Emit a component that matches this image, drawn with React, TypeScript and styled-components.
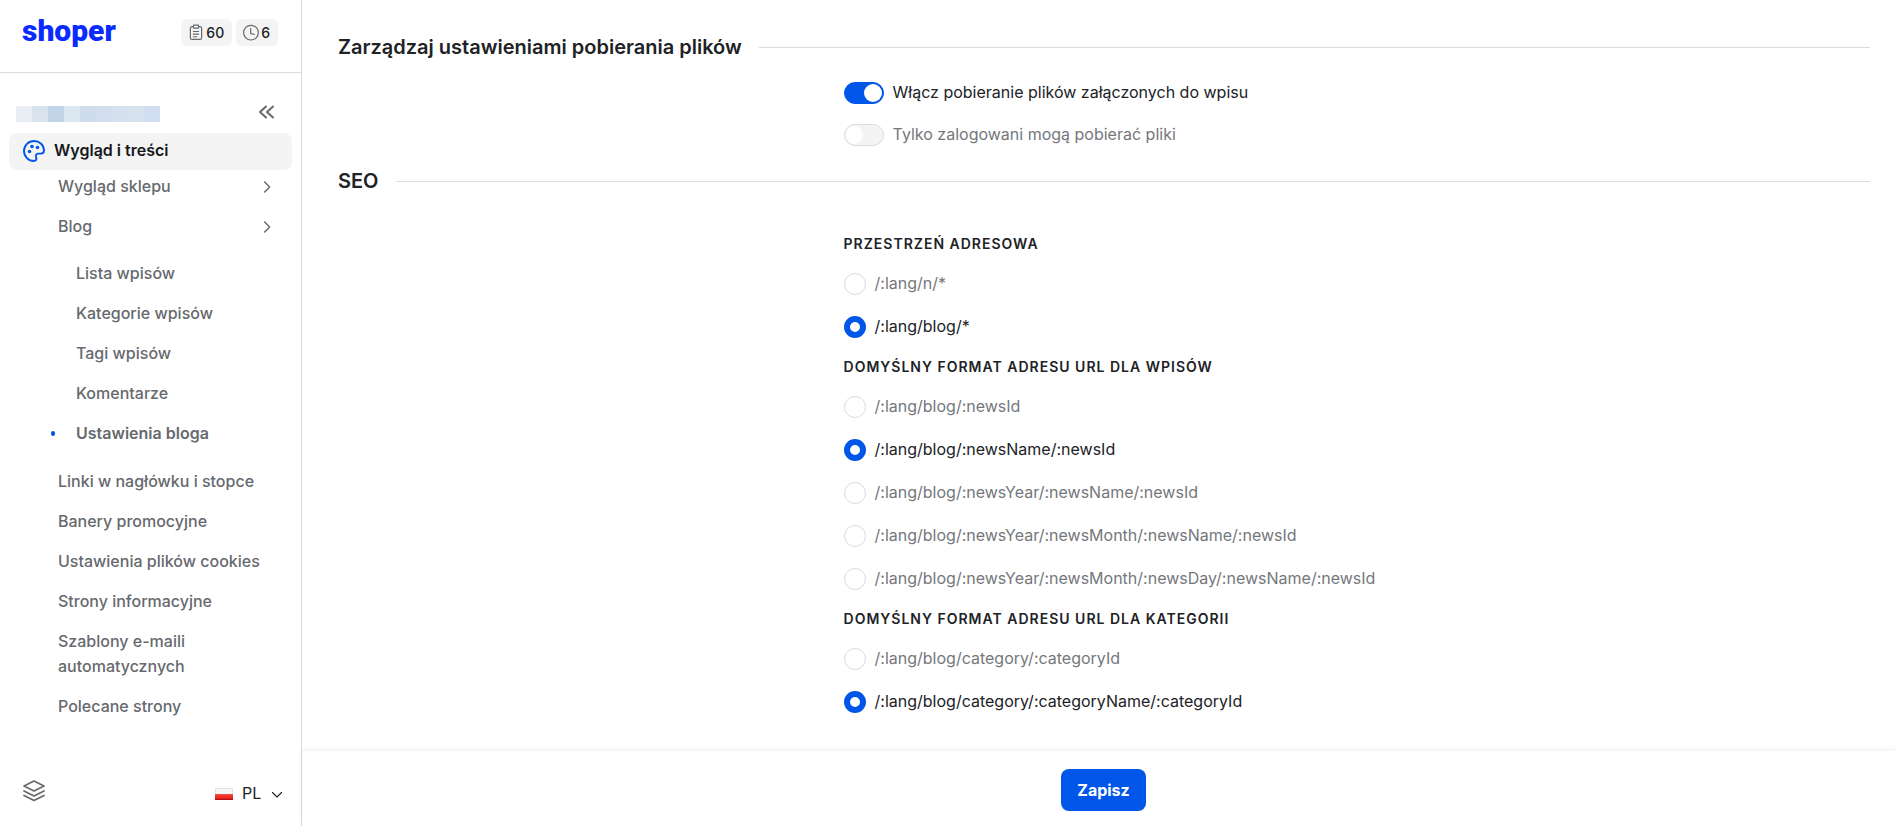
import React, { useState } from "react";
import styled, { createGlobalStyle, css } from "styled-components";

const color = {
  text: "#202226",
  muted: "#66696e",
  inactive: "#75777b",
  blue: "#0056e8",
  brand: "#0a2bff",
  line: "#dcdcde",
  soft: "#f4f4f4",
};

const GlobalStyle = createGlobalStyle`
  *, *::before, *::after { box-sizing: border-box; }
  body {
    margin: 0;
    background: #fff;
    color: ${color.text};
    font-family: Inter, "Liberation Sans", sans-serif;
    font-size: 16px;
    line-height: 25px;
  }
  button, select, input { font: inherit; color: inherit; margin: 0; }
  ul { list-style: none; margin: 0; padding: 0; }
`;

const Page = styled.div`
  display: flex;
  min-height: 100vh;
`;

const Sidebar = styled.aside`
  display: flex;
  flex-direction: column;
  flex: none;
  width: 302px;
  border-right: 1px solid ${color.line};
`;

const SidebarHeader = styled.header`
  display: flex;
  justify-content: space-between;
  align-items: flex-start;
  padding: 14px 23px 0 22px;
  height: 73px;
  border-bottom: 1px solid ${color.line};
`;

const Logo = styled.a`
  color: ${color.brand};
  font-family: Roboto, Inter, sans-serif;
  font-size: 30px;
  line-height: 34px;
  font-weight: 900;
  text-decoration: none;
`;

const Counters = styled.div`
  display: flex;
  gap: 4px;
  padding-top: 5px;
`;

const Counter = styled.button`
  display: flex;
  align-items: center;
  gap: 1px;
  height: 27px;
  padding: 0 8px 0 6px;
  border: 0;
  border-radius: 6px;
  background: ${color.soft};
  font-size: 14px;
  font-weight: 500;
  svg { color: ${color.muted}; }
`;

const StoreRow = styled.div`
  display: flex;
  justify-content: space-between;
  align-items: flex-end;
  padding: 27px 22px 9px 16px;
`;

const StoreName = styled.div`
  display: flex;
  padding-bottom: 2px;
`;

const Tile = styled.span<{ $tone: string }>`
  width: 16px;
  height: 16px;
  background: ${(p) => p.$tone};
`;

const IconButton = styled.button`
  display: flex;
  align-items: center;
  justify-content: center;
  padding: 0;
  border: 0;
  background: none;
  color: ${color.muted};
`;

const SectionLink = styled.a`
  display: flex;
  align-items: center;
  gap: 8px;
  height: 37px;
  margin: 0 9px;
  padding: 0 13px 2px;
  border-radius: 8px;
  background: ${color.soft};
  color: #17181b;
  font-weight: 600;
  text-decoration: none;
  svg { color: ${color.blue}; }
`;

const Menu = styled.ul`
  display: flex;
  flex-direction: column;
  gap: 15px;
  padding: 4px 27px 0 58px;
`;

const SubMenu = styled.ul`
  display: flex;
  flex-direction: column;
  gap: 15px;
  padding: 22px 0 8px 18px;
`;

const MenuLink = styled.a<{ $current?: boolean }>`
  display: flex;
  align-items: center;
  justify-content: space-between;
  position: relative;
  color: ${color.muted};
  font-weight: 500;
  text-decoration: none;
  ${(p) =>
    p.$current &&
    css`
      font-weight: 600;
      &::before {
        content: "";
        position: absolute;
        left: -25px;
        width: 4px;
        height: 5px;
        border-radius: 2px;
        background: ${color.blue};
      }
    `}
`;

const SidebarFooter = styled.footer`
  display: flex;
  align-items: flex-start;
  justify-content: space-between;
  margin-top: auto;
  padding: 0 18px 20px 22px;
`;

const Language = styled.label`
  display: flex;
  align-items: center;
  gap: 9px;
  padding-top: 2px;
`;

const LanguageSelect = styled.select`
  appearance: none;
  border: 0;
  background: none;
  padding: 0;
  width: 20px;
  line-height: 25px;
`;

const Main = styled.main`
  display: flex;
  flex-direction: column;
  flex: 1;
  min-width: 0;
`;

const Content = styled.div`
  flex: 1;
  padding: 34px 26px 36px 36px;
`;

const Heading = styled.h2<{ $spaced?: boolean }>`
  display: flex;
  align-items: center;
  gap: 17px;
  margin: ${(p) => (p.$spaced ? "22px 0 40px" : "0 0 22px")};
  font-size: 20px;
  line-height: 26px;
  font-weight: 600;
  &::after {
    content: "";
    flex: 1;
    height: 1px;
    background: ${color.line};
  }
`;

const Fields = styled.div<{ $gap: number }>`
  display: flex;
  flex-direction: column;
  gap: ${(p) => p.$gap}px;
  padding-left: 33%;
`;

const Group = styled.fieldset`
  min-width: 0;
  margin: 0;
  padding: 0;
  border: 0;
`;

const Legend = styled.legend`
  margin-bottom: 19px;
  padding: 0;
  font-size: 14px;
  line-height: 20px;
  font-weight: 600;
  letter-spacing: 1px;
`;

const Options = styled.div`
  display: flex;
  flex-direction: column;
  gap: 21px;
`;

const Option = styled.label<{ $on: boolean }>`
  display: flex;
  align-items: flex-start;
  gap: 9px;
  height: 22px;
  line-height: 20px;
  color: ${(p) => (p.$on ? color.text : color.inactive)};
`;

const Radio = styled.input`
  appearance: none;
  flex: none;
  width: 22px;
  height: 22px;
  border: 1px solid ${color.line};
  border-radius: 50%;
  background: #fff;
  &:checked { border: 6px solid ${color.blue}; }
`;

const Switch = styled.input`
  appearance: none;
  display: flex;
  align-items: center;
  flex: none;
  width: 40px;
  height: 22px;
  padding: 0 1px;
  border: 1px solid ${color.line};
  border-radius: 11px;
  background: ${color.soft};
  &::before {
    content: "";
    width: 17px;
    height: 18px;
    border-radius: 50%;
    background: #fff;
  }
  &:checked {
    justify-content: flex-end;
    border-color: ${color.blue};
    background: ${color.blue};
  }
  &:checked::before { width: 18px; }
`;

const ActionBar = styled.footer`
  position: sticky;
  bottom: 0;
  display: flex;
  justify-content: center;
  padding: 18px 27px 15px 36px;
  background: #fff;
  box-shadow: 0 -2px 5px rgba(0, 0, 0, 0.06);
`;

const SaveButton = styled.button`
  height: 42px;
  padding: 0 16px;
  border: 0;
  border-radius: 8px;
  background: ${color.blue};
  color: #fff;
  font-weight: 700;
`;

type IconProps = { size?: number; width?: number; children: React.ReactNode };

function Icon({ size = 24, width = 2, children }: IconProps) {
  return (
    <svg
      width={size}
      height={size}
      viewBox="0 0 24 24"
      fill="none"
      stroke="currentColor"
      strokeWidth={width}
      strokeLinecap="round"
      strokeLinejoin="round"
      aria-hidden="true"
    >
      {children}
    </svg>
  );
}

const ClipboardIcon = () => (
  <Icon size={18} width={1.6}>
    <path d="M8.5 3.500H6.500a2 2 0 0 0-2 2v13a2 2 0 0 0 2 2h11a2 2 0 0 0 2-2v-13a2 2 0 0 0-2-2h-2" />
    <rect x="8.5" y="1.500" width="7" height="4" rx="1" />
    <path d="M8.5 10h7M8.5 13.500h7M8.5 17h4.500" />
  </Icon>
);

const ClockIcon = () => (
  <Icon size={18} width={1.6}>
    <circle cx="12" cy="11.500" r="9.800" />
    <path d="M11.500 6v6.500l5 1.500" />
  </Icon>
);

const CollapseIcon = () => (
  <Icon width={2}>
    <path d="M11 6.500l-6 5.500 6 5.500M18 6.500l-6 5.500 6 5.500" />
  </Icon>
);

const PaletteIcon = () => (
  <Icon width={1.9}>
    <path d="M12 2C6.4 2 2 6.5 2 12s4.5 10 10 10c1.7 0 2.7-1.2 2.3-2.8l-.4-1.6c-.4-1.6.7-3 2.3-3H19c2 0 3-1.300 3-3C22 6 17.500 2 12 2z" />
    <g fill="currentColor" stroke="none">
      <circle cx="7.500" cy="12.500" r="1.800" />
      <circle cx="10" cy="7.500" r="1.800" />
      <circle cx="15.500" cy="8.500" r="1.800" />
    </g>
  </Icon>
);

const ChevronRight = () => (
  <Icon size={14} width={2.5}>
    <path d="M8 3.500l8.500 8.500L8 20.500" />
  </Icon>
);

const ChevronDown = () => (
  <Icon size={12} width={2.2}>
    <path d="M3 9l9 9 9-9" />
  </Icon>
);

const LayersIcon = () => (
  <Icon width={1.7}>
    <path d="M12 2l10 5-10 5L2 7z" />
    <path d="M2 12l10 5 10-5" />
    <path d="M2 16.500l10 5 10-5" />
  </Icon>
);

const Flag = () => (
  <svg width="18" height="12" viewBox="0 0 18 12" aria-hidden="true">
    <defs>
      <linearGradient id="flagRed" x1="0" y1="0" x2="0" y2="1">
        <stop offset="0" stopColor="#fb4a42" />
        <stop offset="1" stopColor="#dc0f13" />
      </linearGradient>
    </defs>
    <rect x="0.500" y="0.500" width="17" height="11" fill="#f6f6f6" stroke="#e6e2e2" />
    <rect y="6" width="18" height="6" fill="url(#flagRed)" />
    <path d="M0 11.500h18" stroke="#b00f14" />
  </svg>
);

const nameTiles = [
  "#e8eef4", "#d8e3ee", "#c3d5e8", "#dbe7f1", "#cfdcec",
  "#d3dfee", "#d5e1ee", "#d6e2ee", "#d1ddf0",
];

const blogPages = ["Lista wpisów", "Kategorie wpisów", "Tagi wpisów", "Komentarze", "Ustawienia bloga"];

const otherPages = [
  "Linki w nagłówku i stopce",
  "Banery promocyjne",
  "Ustawienia plików cookies",
  "Strony informacyjne",
  "Szablony e-maili automatycznych",
  "Polecane strony",
];

const urlGroups = [
  { id: "base", title: "PRZESTRZEŃ ADRESOWA", initial: 1, options: ["/:lang/n/*", "/:lang/blog/*"] },
  {
    id: "posts",
    title: "DOMYŚLNY FORMAT ADRESU URL DLA WPISÓW",
    initial: 1,
    options: [
      "/:lang/blog/:newsId",
      "/:lang/blog/:newsName/:newsId",
      "/:lang/blog/:newsYear/:newsName/:newsId",
      "/:lang/blog/:newsYear/:newsMonth/:newsName/:newsId",
      "/:lang/blog/:newsYear/:newsMonth/:newsDay/:newsName/:newsId",
    ],
  },
  {
    id: "categories",
    title: "DOMYŚLNY FORMAT ADRESU URL DLA KATEGORII",
    initial: 1,
    options: ["/:lang/blog/category/:categoryId", "/:lang/blog/category/:categoryName/:categoryId"],
  },
];

function RadioGroup({ id, title, initial, options }: (typeof urlGroups)[number]) {
  const [selected, setSelected] = useState(initial);
  return (
    <Group>
      <Legend>{title}</Legend>
      <Options>
        {options.map((option, i) => (
          <Option key={option} $on={i === selected}>
            <Radio type="radio" name={id} checked={i === selected} onChange={() => setSelected(i)} />
            {option}
          </Option>
        ))}
      </Options>
    </Group>
  );
}

function SwitchField({ label, initial }: { label: string; initial: boolean }) {
  const [on, setOn] = useState(initial);
  return (
    <Option $on={on}>
      <Switch type="checkbox" role="switch" checked={on} onChange={() => setOn(!on)} />
      {label}
    </Option>
  );
}

export default function App() {
  return (
    <>
      <GlobalStyle />
      <Page>
        <Sidebar>
          <SidebarHeader>
            <Logo href="#">shoper</Logo>
            <Counters>
              <Counter type="button"><ClipboardIcon />60</Counter>
              <Counter type="button"><ClockIcon />6</Counter>
            </Counters>
          </SidebarHeader>
          <StoreRow>
            <StoreName>
              {nameTiles.map((tone, i) => <Tile key={i} $tone={tone} />)}
            </StoreName>
            <IconButton type="button" aria-label="Zwiń menu"><CollapseIcon /></IconButton>
          </StoreRow>
          <nav>
            <SectionLink href="#"><PaletteIcon />Wygląd i treści</SectionLink>
            <Menu>
              <li><MenuLink href="#">Wygląd sklepu<ChevronRight /></MenuLink></li>
              <li>
                <MenuLink href="#">Blog<ChevronRight /></MenuLink>
                <SubMenu>
                  {blogPages.map((page) => (
                    <li key={page}>
                      <MenuLink href="#" $current={page === "Ustawienia bloga"}>{page}</MenuLink>
                    </li>
                  ))}
                </SubMenu>
              </li>
              {otherPages.map((page) => (
                <li key={page}><MenuLink href="#">{page}</MenuLink></li>
              ))}
            </Menu>
          </nav>
          <SidebarFooter>
            <IconButton type="button" aria-label="Warstwy"><LayersIcon /></IconButton>
            <Language>
              <Flag />
              <LanguageSelect defaultValue="PL"><option>PL</option></LanguageSelect>
              <ChevronDown />
            </Language>
          </SidebarFooter>
        </Sidebar>
        <Main>
          <Content>
            <Heading>Zarządzaj ustawieniami pobierania plików</Heading>
            <Fields $gap={20}>
              <SwitchField label="Włącz pobieranie plików załączonych do wpisu" initial />
              <SwitchField label="Tylko zalogowani mogą pobierać pliki" initial={false} />
            </Fields>
            <Heading $spaced>SEO</Heading>
            <Fields $gap={19}>
              {urlGroups.map((group) => <RadioGroup key={group.id} {...group} />)}
            </Fields>
          </Content>
          <ActionBar>
            <SaveButton type="button">Zapisz</SaveButton>
          </ActionBar>
        </Main>
      </Page>
    </>
  );
}
